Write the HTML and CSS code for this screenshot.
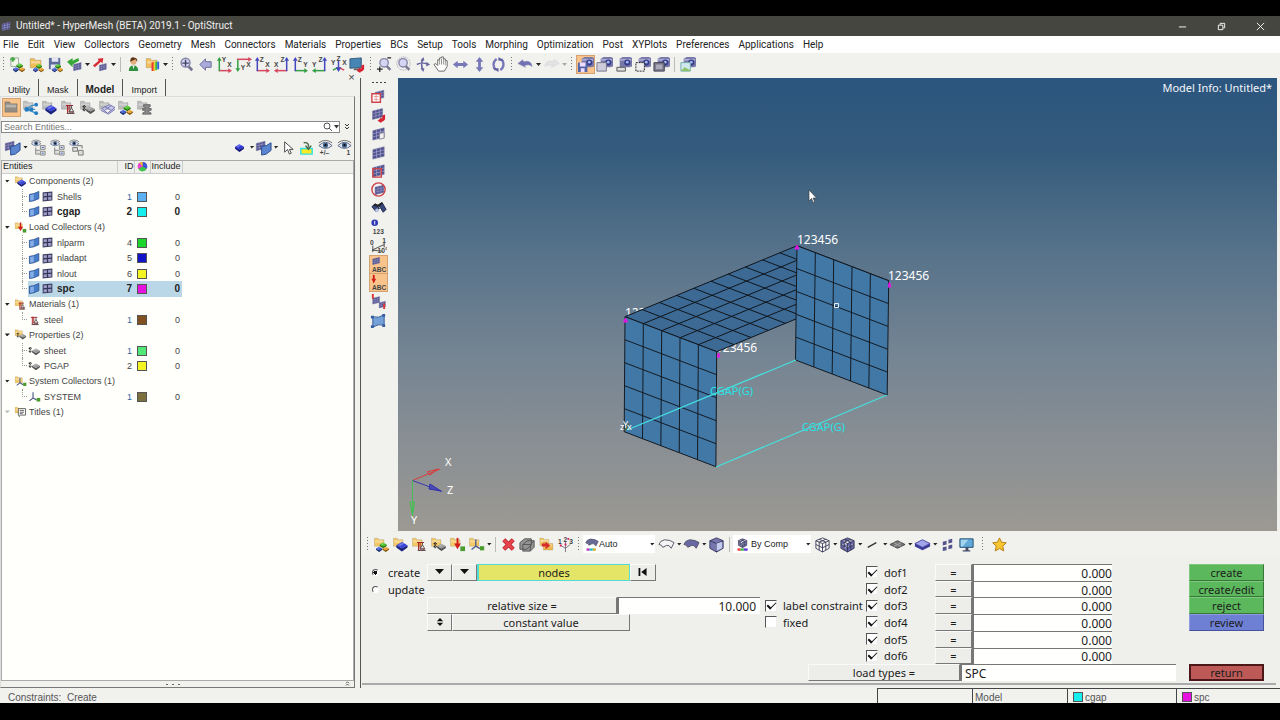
FILE: index.html
```html
<!DOCTYPE html>
<html lang="en">
<head>
<meta charset="utf-8">
<title>Untitled* - HyperMesh (BETA) 2019.1 - OptiStruct</title>
<link rel="stylesheet" href="styles.css">
</head>
<body>
<svg class="defs" aria-hidden="true">
<symbol id="blk" viewBox="0 0 18 18"><path d="M2 8v3l7 5 7-5V8l-7 4z" fill="currentColor"/><path d="M2 8v3l7 5 7-5V8l-7 4z" fill="#000" opacity=".45"/><path d="M2 8l7-4 7 4-7 4z" fill="currentColor"/><path d="M4 8l5-3 3 1-5 3z" fill="#fff" opacity=".3"/></symbol>
<symbol id="fold" viewBox="0 0 18 18"><path d="M2 3h5l1 2h7v9H2z" fill="currentColor" stroke="#0004" stroke-width=".6"/><path d="M3 6h11v3H3z" fill="#fff" opacity=".35"/></symbol>
<symbol id="mesh" viewBox="0 0 18 18"><path d="M3 6l12-3v10L3 16z" fill="#51518f" stroke="#77779f" stroke-width=".6"/><path d="M7 5v10M11 4v10M3 9.300l12-3M3 12.600l12-3" stroke="#b9b9dc" stroke-width=".6" fill="none"/></symbol>
<symbol id="cam" viewBox="0 0 18 18"><path d="M4 3l3-2h8l2 1v9l-3 1H4z" fill="#7777a8"/><path d="M4 3h12v2H4z" fill="#a9a9d4"/><circle cx="12" cy="7" r="3.200" fill="#333b88"/><circle cx="12" cy="6.500" r="1.500" fill="#a7b8ee"/></symbol>
<symbol id="comp" viewBox="0 0 18 18"><use href="#fold" color="#f3c866" width="14" height="14"/><use href="#blk" x="3" y="3" width="15" height="15" color="#3543db"/></symbol>
<symbol id="trio" viewBox="0 0 18 18"><use href="#blk" x="4" y="1" width="12" height="12" color="#45c325"/><use href="#blk" x="-1" y="7" width="11" height="11" color="#3557cf"/><use href="#blk" x="8" y="7" width="11" height="11" color="#e99c20"/></symbol>
<symbol id="assem" viewBox="0 0 18 18"><use href="#fold" width="14" height="14"/><use href="#trio" x="3" y="4" width="14" height="14"/></symbol>
<symbol id="rig" viewBox="0 0 18 18"><path d="M6 16V6h2v8h5v2zM4 6h9" fill="none" stroke="#a92626" stroke-width="1.300"/><path d="M11 6v3l-3 5h6l-3-5M5 16h10" fill="none" stroke="#555" stroke-width="1.200"/></symbol>
<symbol id="matf" viewBox="0 0 18 18"><use href="#fold" width="14" height="14"/><use href="#rig" x="3" y="2" width="15" height="15"/></symbol>
<symbol id="prop" viewBox="0 0 18 18"><path d="M3 4v9M1 6h4M1 10h4" stroke="#222" stroke-width="1.500" stroke-dasharray="2 1"/><use href="#blk" x="4" y="2" width="14" height="16" color="#999"/></symbol>
<symbol id="propf" viewBox="0 0 18 18"><use href="#fold" width="14" height="14"/><use href="#prop" x="3" y="3" width="15" height="15"/></symbol>
<symbol id="loadf" viewBox="0 0 18 18"><use href="#fold" color="#f3c866" width="14" height="14"/><path d="M9 2v7" stroke="#d21c1c" stroke-width="2"/><path d="M5.500 8h7L9 14z" fill="#d21c1c"/><path d="M12 11h5v5h-5z" fill="#4a9c2d"/></symbol>
<symbol id="sys" viewBox="0 0 18 18"><path d="M7 3v8l-5 4M7 11l5 3" fill="none" stroke="#4c5a8a" stroke-width="1.600"/><path d="M12 11h5v5h-5z" fill="#4a9c2d"/></symbol>
<symbol id="sysf" viewBox="0 0 18 18"><use href="#fold" color="#f3c866" width="14" height="14"/><use href="#sys" x="2" y="1" width="16" height="16"/></symbol>
<symbol id="titlef" viewBox="0 0 18 18"><use href="#fold" color="#f3c866" width="13" height="15"/><path d="M6 5h10v9H9l-2 2v-2H6z" fill="#fff" stroke="#333"/><path d="M8 7.500h6M8 10h6M8 12h4" stroke="#333"/></symbol>
<symbol id="geo" viewBox="0 0 18 18"><path d="M2 6l6-1 7-3v10l-7 3-6 1z" fill="#477dc8" stroke="#1f4586"/><path d="M3 7l5-1v8l-5 1z" fill="#86aee5"/></symbol>
<symbol id="elem" viewBox="0 0 18 18"><path d="M3 4l12-1v11L3 15z" fill="#9c9cc8" stroke="#444466" stroke-width="1.500"/><path d="M9 3v12M3 9.500L15 8.500" stroke="#333355" stroke-width="1.600"/></symbol>
<symbol id="meshgeo" viewBox="0 0 18 18"><use href="#mesh" x="-1" y="-1" width="14" height="16"/><path d="M7 8l5-1 5-3v8l-5 4-5 1z" fill="#5b85cf" stroke="#274b91"/></symbol>
<symbol id="eye" viewBox="0 0 18 18"><path d="M2 7q7-7 14 0-7 6-14 0z" fill="#dfe6f4" stroke="#596580"/><circle cx="9" cy="6.500" r="2.700" fill="#41618d"/><circle cx="9" cy="6.500" r="1.200" fill="#111"/><path d="M2 4q7-5 14 0" stroke="#666" fill="none"/></symbol>
<symbol id="eyetree" viewBox="0 0 18 18"><use href="#eye" width="13" height="13"/><path d="M6 9v7h5M6 12h5M11 7h5v4h-5zM11 13h5v4h-5z" fill="#ddd" stroke="#888"/><path d="M12.500 9h2M12.500 15h2" stroke="#36c"/></symbol>
<symbol id="redarr" viewBox="0 0 18 18"><path d="M9 12h4V9l3-1v5q-2 3-4 3v1l-4-2.500 4-3" fill="#d52333"/></symbol>
<symbol id="lens" viewBox="0 0 18 18"><path d="M11 11l5 5" stroke="#777792" stroke-width="3"/><circle cx="8.500" cy="7.500" r="5" fill="#d6d6f4" stroke="#8585a8" stroke-width="1.600"/></symbol>
<symbol id="av" viewBox="0 0 18 18"><path d="M3.500 16V4" stroke="currentColor" stroke-width="1.600"/><path d="M1 5l2.500-4L6 5z" fill="currentColor"/></symbol>
<symbol id="ah" viewBox="0 0 18 18"><path d="M3 15.500h11" stroke="currentColor" stroke-width="1.600"/><path d="M13 13l4 2.500-4 2.500z" fill="currentColor"/></symbol>
<symbol id="cube" viewBox="0 0 18 18"><path d="M2 5l7-3 7 3v8l-7 4-7-4z" fill="#7777ad" stroke="#363660"/><path d="M2 5l7 3 7-3M9 8v9" fill="none" stroke="#363660"/></symbol>
<symbol id="cubeg" viewBox="0 0 18 18"><path d="M2 5l7-3 7 3v8l-7 4-7-4zM2 5l7 3 7-3M9 8v9M5.500 3.500l7 3v8.500M12.500 3.500l-7 3V15M2 9l7 3.500L16 9" fill="currentColor" stroke="#333351" stroke-width=".9"/></symbol>
<symbol id="curve" viewBox="0 0 18 18"><path d="M1 9q1-4 6-5 6 0 10 3l-3 6q-2-4-5-3l-4 2q-1-3-4-3z" fill="currentColor" stroke="#555566"/></symbol>
<symbol id="monitor" viewBox="0 0 18 18"><path d="M2 3h14v9H2z" fill="#60a9d9" stroke="#234d70"/><path d="M3 4h8l-6 7H3z" fill="#a5d4ee"/><path d="M8 12h3v3H8zM5 15h8v1.500H5z" fill="#444b66"/></symbol>
<symbol id="undo" viewBox="0 0 18 18"><path d="M1 8l5-4 1 2q8-2 9 5-3-3-8-1l1 2z" fill="currentColor" stroke="#8080b0" stroke-width=".5"/></symbol>
</svg>

<header class="title"><svg class="app"><use href="#mesh"/></svg><h1>Untitled* - HyperMesh (BETA) 2019.1 - OptiStruct</h1>
<div class="win"><button aria-label="Minimize"><svg viewBox="0 0 10 10"><path d="M1 5.500h8"/></svg></button><button aria-label="Restore"><svg viewBox="0 0 10 10"><path d="M1.500 3.500h5v5h-5zM3.500 3V1.500h5v5H7"/></svg></button><button aria-label="Close"><svg viewBox="0 0 10 10"><path d="M1 1l8 8M9 1L1 9"/></svg></button></div></header>
<nav class="menu"><button>File</button><button>Edit</button><button>View</button><button>Collectors</button><button>Geometry</button><button>Mesh</button><button>Connectors</button><button>Materials</button><button>Properties</button><button>BCs</button><button>Setup</button><button>Tools</button><button>Morphing</button><button>Optimization</button><button>Post</button><button>XYPlots</button><button>Preferences</button><button>Applications</button><button>Help</button></nav>

<div class="bar std" role="toolbar" aria-label="Standard">
<i class="handle"></i>
<button class="ic" aria-label="New"><svg viewBox="0 0 18 18"><path d="M2 2h8v9H2z" fill="#f2f7ea" stroke="#9a9"/><path d="M4 1v5M1.500 3.500h5" stroke="#4a4" stroke-width="2"/><use href="#trio" x="4" y="5" width="13" height="13"/></svg></button>
<button class="ic" aria-label="Open"><svg viewBox="0 0 18 18"><use href="#fold" color="#f0bf58" width="17" height="16"/><use href="#trio" x="5" y="6" width="12" height="12"/></svg></button>
<button class="ic" aria-label="Save"><svg viewBox="0 0 18 18"><path d="M2 2h12v12H2z" fill="#5d6b9c"/><path d="M5 2h7v4H5zM4 9h8v5H4z" fill="#e3e6f2"/><use href="#trio" x="5" y="6" width="12" height="12"/></svg></button>
<button class="ic" aria-label="Import"><svg viewBox="0 0 18 18"><use href="#mesh" x="6" y="4" width="12" height="14"/><path d="M1 6l6-4v3l6-3 1 3-7 4v3z" fill="#38a83a"/></svg></button><i class="dd"></i>
<button class="ic" aria-label="Export"><svg viewBox="0 0 18 18"><use href="#mesh" x="6" y="5" width="11" height="13"/><path d="M1 10l6-5-1-2 6-1-1 6-1.500-2L3 12z" fill="#d92c36"/></svg></button><i class="dd"></i>
<i class="sep"></i>
<button class="ic" aria-label="User profile"><svg viewBox="0 0 18 18"><path d="M4 16q0-6 5-6t5 6z" fill="#2f9140"/><path d="M8 10l1 4 1-4z" fill="#fff"/><circle cx="9" cy="6" r="3.200" fill="#e4ad7e"/><path d="M5.500 6q0-5 4-4.500T13 6l-2-2.500z" fill="#5d3210"/></svg></button>
<button class="ic" aria-label="Results"><svg viewBox="0 0 18 18"><use href="#fold" color="#f0bf58" width="17" height="16"/><path d="M8 7l3-1v10H8z" fill="#e33"/><path d="M10 6h2v10h-2z" fill="#ec3"/><path d="M12 6h2v9h-2z" fill="#3b4"/><path d="M14 6h2v8h-2z" fill="#36d"/></svg></button><i class="dd"></i>
<i class="handle"></i>
<button class="ic" aria-label="Fit"><svg viewBox="0 0 18 18"><use href="#lens" width="17" height="17"/><path d="M8 4v7M4.500 7.500h7" stroke="#446" stroke-width="1.500"/></svg></button>
<button class="ic" aria-label="Previous view"><svg viewBox="0 0 18 18"><path d="M3 9l6-6v3h6v6H9v3z" fill="#a9a9da" stroke="#6a6a99"/></svg></button>
<button class="ic ax" aria-label="XY top"><svg viewBox="0 0 18 18"><use href="#ah" color="#d54a5e"/><use href="#av" color="#35a044"/><text x="6" y="6">Y</text><text x="12" y="12">X</text></svg></button>
<button class="ic ax" aria-label="XY bottom"><svg viewBox="0 0 18 18"><path d="M2 3.500h13" stroke="#d54a5e" stroke-width="1.600"/><path d="M14 1l4 2.500L14 6z" fill="#d54a5e"/><path d="M3 4v10" stroke="#35a044" stroke-width="1.600"/><path d="M.500 13h5L3 17z" fill="#35a044"/><text x="6" y="15">Y</text><text x="12" y="12">X</text></svg></button>
<button class="ic ax" aria-label="XZ left"><svg viewBox="0 0 18 18"><use href="#ah" color="#d54a5e"/><use href="#av" color="#4648bd"/><text x="6" y="6">Z</text><text x="12" y="12">X</text></svg></button>
<button class="ic ax" aria-label="XZ right"><svg viewBox="0 0 18 18"><g transform="matrix(-1 0 0 1 18 0)"><use href="#ah" color="#d54a5e"/><use href="#av" color="#4648bd"/></g><text x="8" y="6">Z</text><text x="1" y="12">X</text></svg></button>
<button class="ic ax" aria-label="YZ front"><svg viewBox="0 0 18 18"><use href="#ah" color="#35a044"/><use href="#av" color="#4648bd"/><text x="6" y="6">Z</text><text x="12" y="12">Y</text></svg></button>
<button class="ic ax" aria-label="YZ rear"><svg viewBox="0 0 18 18"><g transform="matrix(-1 0 0 1 18 0)"><use href="#ah" color="#35a044"/><use href="#av" color="#4648bd"/></g><text x="8" y="6">Z</text><text x="1" y="12">Y</text></svg></button>
<button class="ic ax" aria-label="Isometric"><svg viewBox="0 0 18 18"><path d="M9 12V5" stroke="#4648bd" stroke-width="1.600"/><path d="M9 12l-6 3" stroke="#35a044" stroke-width="1.600"/><path d="M9 12l6 3" stroke="#d54a5e" stroke-width="1.600"/><path d="M6 12h6l-3 5z" fill="#4648bd"/><text x="1" y="9">Y</text><text x="7" y="5">Z</text><text x="13" y="9">X</text></svg></button>
<button class="ic" aria-label="Reset view"><svg viewBox="0 0 18 18"><path d="M1 3l12-1v10L1 13z" fill="#4785b5" stroke="#345a7b"/><path d="M5 14h7" stroke="#666" stroke-width="2"/><use href="#redarr" y="1"/></svg></button>
<i class="handle"></i>
<button class="ic" aria-label="Zoom in out"><svg viewBox="0 0 18 18"><use href="#lens" x="1" width="16" height="17"/><path d="M1 14h6M4 11v6M12 2h4" stroke="#222" stroke-width="1.300"/></svg></button>
<button class="ic" aria-label="Circle zoom"><svg viewBox="0 0 18 18"><use href="#lens" x="1" width="16" height="17"/><circle cx="9" cy="8" r="7" fill="none" stroke="#99a" stroke-dasharray="1 1"/></svg></button>
<button class="ic" aria-label="Rotate"><svg viewBox="0 0 18 18"><path d="M9 3q-2 6 0 12M3 9q6-3 12 0" fill="none" stroke="#6868a0" stroke-width="1.600"/><path d="M7 5l3-4 1 4zM13 6l4 3-4 2zM7 13h4l-1 4z" fill="#6868a0"/></svg></button>
<button class="ic" aria-label="Pan"><svg viewBox="0 0 18 18"><path d="M6 16l-5-7 2-1 2 2V4l2 0V2h2l0-1h2v2h2v2l2 0v6l-3 5z" fill="#fff" stroke="#666"/><path d="M7 4v5M9 3v6M11 3v6M13 5v5" stroke="#777" stroke-width=".8"/></svg></button>
<button class="ic" aria-label="Pan horizontally"><svg viewBox="0 0 18 18"><path d="M1 9l5-4v2.500h6V5l5 4-5 4v-2.500H6V13z" fill="#7878b9"/></svg></button>
<button class="ic" aria-label="Pan vertically"><svg viewBox="0 0 18 18"><path d="M9 1l4 5h-2.500v6H13l-4 5-4-5h2.500V6H5z" fill="#7878b9"/></svg></button>
<button class="ic" aria-label="Spin"><svg viewBox="0 0 18 18"><path d="M7 3q-6 5-1 12M11 15q6-5 1-12" fill="none" stroke="#7878b9" stroke-width="2.400"/><path d="M3 13h6v4zM15 5H9V1z" fill="#5c5c9c"/></svg></button>
<i class="handle"></i>
<button class="ic" aria-label="Undo view"><svg><use href="#undo" color="#7070b5"/></svg></button><i class="dd"></i>
<button class="ic off" aria-label="Redo view"><svg viewBox="0 0 18 18"><use href="#undo" color="#ccc" transform="matrix(-1 0 0 1 18 0)"/></svg></button><i class="dd off"></i>
<i class="handle"></i>
<button class="ic on" aria-label="Save image"><svg viewBox="0 0 18 18"><use href="#cam" x="1"/><path d="M1 7h10v10H1z" fill="#5263a6"/><path d="M3 7h6v4H3zM4 13h4v4H4z" fill="#edf"/></svg></button>
<button class="ic" aria-label="Capture window"><svg viewBox="0 0 18 18"><use href="#cam" x="1"/><path d="M1 7h10v9H1z" fill="#ccd" stroke="#778"/></svg></button>
<button class="ic" aria-label="Capture panel"><svg viewBox="0 0 18 18"><use href="#cam" x="1"/><path d="M2 12h9v4H2z" fill="#ddd" stroke="#555"/></svg></button>
<button class="ic" aria-label="Capture area"><svg viewBox="0 0 18 18"><use href="#cam" x="1"/><path d="M2 7h9v9H2z" fill="#eee" stroke="#222" stroke-dasharray="2 1"/></svg></button>
<button class="ic" aria-label="Capture screen"><svg viewBox="0 0 18 18"><use href="#cam" x="1"/><path d="M1 7h11v9H1z" fill="#778" stroke="#445"/><path d="M3 9h7v5H3z" fill="#aab"/></svg></button>
<i class="sep"></i>
<button class="ic" aria-label="Capture picture"><svg viewBox="0 0 18 18"><use href="#cam" x="1"/><path d="M2 7h10v9H2z" fill="#cfe9ef" stroke="#7aa"/><path d="M2 16l4-4 6 3v1z" fill="#8cc466"/></svg></button>
</div>

<div class="work">
<aside class="browser">
<button class="x" aria-label="Close browser">×</button>
<div class="tabs" role="tablist"><button role="tab">Utility</button><button role="tab">Mask</button><button role="tab" aria-selected="true">Model</button><button role="tab">Import</button></div>
<div class="pane">
<div class="views">
<button class="ic on" aria-label="Model view"><svg color="#938d84"><use href="#fold"/></svg></button>
<button class="ic" aria-label="Include view"><svg viewBox="0 0 18 18" color="#bbb"><use href="#fold" width="14" height="14"/><path d="M5 11l5-4 6-1M5 11l5 2 5 2M5 11h9" stroke="#4596ce" stroke-width="1.500" fill="none"/><g fill="#257bc0"><circle cx="5" cy="11" r="2.500"/><circle cx="15" cy="6" r="2"/><circle cx="15" cy="15" r="2"/><circle cx="10" cy="11" r="2"/></g></svg></button>
<button class="ic" aria-label="Component view"><svg viewBox="0 0 18 18" color="#bbb"><use href="#fold" width="14" height="14"/><use href="#blk" x="3" y="3" width="15" height="15" color="#3543db"/></svg></button>
<button class="ic" aria-label="Material view"><svg color="#bbb"><use href="#matf"/></svg></button>
<button class="ic" aria-label="Property view"><svg color="#bbb"><use href="#propf"/></svg></button>
<button class="ic" aria-label="Ply view"><svg viewBox="0 0 18 18" color="#bbb"><use href="#fold" width="14" height="14"/><path d="M4 10l8-4 6 3-8 6zM3 12l8 4 7-5M7 8l7 4M14 7l-7 5" fill="#c8c8e8" stroke="#7474ae"/></svg></button>
<button class="ic" aria-label="Assembly view"><svg color="#bbb"><use href="#assem"/></svg></button>
<button class="ic" aria-label="Connector view"><svg viewBox="0 0 18 18" color="#bbb"><use href="#fold" width="14" height="14"/><path d="M8 6h7v2l-2 1v1h3v2h-3v1l3 2v1H7v-1l3-2v-1H7v-2h3V9L8 8z" fill="#888" stroke="#666"/></svg></button>
</div>
<div class="find"><label><input type="text" placeholder="Search Entities..." aria-label="Search Entities"><svg viewBox="0 0 16 10"><circle cx="4" cy="4" r="3" fill="none" stroke="#555"/><path d="M6 6l3 3" stroke="#555"/><path d="M11 3h5l-2.500 3.500z" fill="#333"/></svg></label><button aria-label="More options"><svg viewBox="0 0 6 8"><path d="M1 1l2 2 2-2M1 4l2 2 2-2" fill="none" stroke="#333"/></svg></button></div>
<div class="bar filter">
<button class="ic" aria-label="Display"><svg><use href="#meshgeo"/></svg></button><i class="dd"></i>
<button class="ic" aria-label="Expand all"><svg><use href="#eyetree"/></svg></button>
<button class="ic" aria-label="Collapse all"><svg><use href="#eyetree"/></svg></button>
<button class="ic" aria-label="Reverse"><svg viewBox="0 0 18 18"><use href="#eye" width="13" height="13"/><path d="M5 9h5v4H5zM11 12h5v5h-5zM9 7h6v3" fill="#ddd" stroke="#777"/></svg></button>
<i class="fill"></i>
<button class="ic" aria-label="Components"><svg viewBox="0 0 18 18"><use href="#blk" x="3" y="3" width="12" height="12" color="#2c35db"/></svg></button><i class="dd slim"></i>
<button class="ic" aria-label="Elements and geometry"><svg><use href="#meshgeo"/></svg></button><i class="dd slim"></i>
<button class="ic" aria-label="Selector"><svg viewBox="0 0 18 18"><path d="M6 3v11l3-3 2 5 2-1-2-4h4z" fill="#fff" stroke="#444"/></svg></button>
<button class="ic" aria-label="Add to display"><svg viewBox="0 0 18 18"><path d="M3 10h12v6H3z" fill="#ffe926" stroke="#30dfe1" stroke-width="1.500"/><path d="M6 4q6-1 5 5M8 7l3 4 3-4" fill="none" stroke="#464" stroke-width="1.500"/></svg></button>
<button class="ic ax" aria-label="Show or hide"><svg viewBox="0 0 18 18"><use href="#eye" x="0" y="0"/><text x="3" y="17">+/–</text></svg></button>
<button class="ic ax" aria-label="Isolate"><svg viewBox="0 0 18 18"><use href="#eye"/><text x="11" y="17">1</text></svg></button>
</div>
<div class="treebox">
<table class="tree">
<thead><tr><th class="c0">Entities</th><th class="c1">ID</th><th class="c2"><svg viewBox="0 0 12 12"><circle cx="6" cy="6" r="5" fill="#e33a3a"/><path d="M6 6V1a5 5 0 0 1 4.500 7.500z" fill="#3458dd"/><path d="M6 6l4.500 2.500a5 5 0 0 1-9 0z" fill="#3cc64b"/><path d="M6 6L1.500 8.500A5 5 0 0 1 3 2z" fill="#e943d8"/><path d="M6 6L3 2a5 5 0 0 1 3-1z" fill="#edce33"/></svg></th><th class="c3">Include</th><th></th></tr></thead>
<tbody>
<tr class="g"><td><span class="tw"></span><svg><use href="#comp"/></svg>Components (2)</td><td></td><td></td><td></td><td></td></tr>
<tr><td><div class="e"><svg><use href="#geo"/></svg><svg><use href="#elem"/></svg>Shells</div></td><td class="b">1</td><td><b class="sw sky"></b></td><td>0</td><td></td></tr>
<tr class="cur"><td><div class="e last"><svg><use href="#geo"/></svg><svg><use href="#elem"/></svg>cgap</div></td><td>2</td><td><b class="sw cyan"></b></td><td>0</td><td></td></tr>
<tr class="g"><td><span class="tw"></span><svg><use href="#loadf"/></svg>Load Collectors (4)</td><td></td><td></td><td></td><td></td></tr>
<tr><td><div class="e"><svg><use href="#geo"/></svg><svg><use href="#elem"/></svg>nlparm</div></td><td>4</td><td><b class="sw green"></b></td><td>0</td><td></td></tr>
<tr><td><div class="e"><svg><use href="#geo"/></svg><svg><use href="#elem"/></svg>nladapt</div></td><td>5</td><td><b class="sw blue"></b></td><td>0</td><td></td></tr>
<tr><td><div class="e"><svg><use href="#geo"/></svg><svg><use href="#elem"/></svg>nlout</div></td><td>6</td><td><b class="sw yellow"></b></td><td>0</td><td></td></tr>
<tr class="cur sel"><td><div class="e last"><svg><use href="#geo"/></svg><svg><use href="#elem"/></svg>spc</div></td><td>7</td><td><b class="sw magenta"></b></td><td>0</td><td></td></tr>
<tr class="g"><td><span class="tw"></span><svg color="#f3c866"><use href="#matf"/></svg>Materials (1)</td><td></td><td></td><td></td><td></td></tr>
<tr><td><div class="e last"><svg><use href="#rig"/></svg>steel</div></td><td class="b">1</td><td><b class="sw brown"></b></td><td>0</td><td></td></tr>
<tr class="g"><td><span class="tw"></span><svg color="#f3c866"><use href="#propf"/></svg>Properties (2)</td><td></td><td></td><td></td><td></td></tr>
<tr><td><div class="e"><svg><use href="#prop"/></svg>sheet</div></td><td class="b">1</td><td><b class="sw mint"></b></td><td>0</td><td></td></tr>
<tr><td><div class="e last"><svg><use href="#prop"/></svg>PGAP</div></td><td>2</td><td><b class="sw yellow"></b></td><td>0</td><td></td></tr>
<tr class="g"><td><span class="tw"></span><svg><use href="#sysf"/></svg>System Collectors (1)</td><td></td><td></td><td></td><td></td></tr>
<tr><td><div class="e last"><svg><use href="#sys"/></svg>SYSTEM</div></td><td class="b">1</td><td><b class="sw olive"></b></td><td>0</td><td></td></tr>
<tr class="g"><td><span class="tw shut"></span><svg><use href="#titlef"/></svg>Titles (1)</td><td></td><td></td><td></td><td></td></tr>
</tbody></table>
</div>
<div class="grip"><i></i><svg viewBox="0 0 6 8"><path d="M1 3l2-2 2 2M1 6l2-2 2 2" fill="none" stroke="#333"/></svg></div>
</div>
</aside>

<main>
<div class="stage">
<div class="side" role="toolbar" aria-label="Visualization">
<i class="hh"></i>
<button class="ic" aria-label="Mask"><svg viewBox="0 0 18 18"><use href="#mesh" x="3" y="0" width="14" height="14"/><path d="M2 6h9v9H2z" fill="#fff" stroke="#cf4148" stroke-width="1.500"/><path d="M4 9h5M4 12h5M6.500 7v7" stroke="#e39a9a"/></svg></button>
<button class="ic" aria-label="Reverse mask"><svg viewBox="0 0 18 18"><use href="#mesh" width="16" height="16"/><use href="#redarr" y="1"/></svg></button>
<button class="ic" aria-label="Unmask adjacent"><svg viewBox="0 0 18 18"><use href="#mesh"/><path d="M10 9l5-1v6l-5 1z" fill="#eee" stroke="#889"/></svg></button>
<button class="ic" aria-label="Unmask all"><svg><use href="#mesh"/></svg></button>
<button class="ic" aria-label="Unmask shown"><svg viewBox="0 0 18 18"><use href="#mesh"/><path d="M3 7h9v9H3z" fill="none" stroke="#cf4148" stroke-width="1.500"/></svg></button>
<button class="ic" aria-label="Spherical clipping"><svg viewBox="0 0 18 18"><use href="#mesh" x="3" y="2" width="14" height="14"/><circle cx="9" cy="9" r="7" fill="none" stroke="#cf4148" stroke-width="1.500"/></svg></button>
<button class="ic" aria-label="Find"><svg viewBox="0 0 18 18"><path d="M2 7l4-3 4 5-4 3zM9 5l4-2 4 7-3 3z" fill="#374778" stroke="#1c254d"/><path d="M4 5l5 1 4-3" stroke="#222" stroke-width="2" fill="none"/><circle cx="7.500" cy="11" r="2" fill="#b8c5e6"/></svg></button>
<button class="ic ax" aria-label="Numbers"><svg viewBox="0 0 18 18"><circle cx="5" cy="5" r="3.500" fill="#2d39b4"/><path d="M5 3v4" stroke="#fff"/><text x="3" y="17">123</text></svg></button>
<button class="ic ax" aria-label="Measure"><svg viewBox="0 0 18 18"><path d="M3 9v7M2 14l13-6M15 6v5M3 14l10 1" stroke="#444" fill="none"/><text x="0" y="8">0</text><text x="13" y="6">1</text><text x="8" y="17">10°</text></svg></button>
<button class="ic ax on" aria-label="Element labels"><svg viewBox="0 0 18 18"><use href="#mesh" x="1" y="-1" width="11" height="12"/><text x="2" y="17">ABC</text></svg></button>
<button class="ic ax on" aria-label="Load labels"><svg viewBox="0 0 18 18"><path d="M4 1v5" stroke="#d21c1c" stroke-width="2"/><path d="M1.500 5h5L4 10z" fill="#d21c1c"/><text x="2" y="17">ABC</text></svg></button>
<button class="ic" aria-label="Load handles"><svg viewBox="0 0 18 18"><use href="#mesh" x="1" y="2" width="11" height="11"/><use href="#mesh" x="8" y="7" width="10" height="10"/><path d="M3 1v5M15 11v6" stroke="#d33" stroke-width="2"/></svg></button>
<button class="ic" aria-label="Morph shape"><svg viewBox="0 0 18 18"><path d="M3 5q6 2 12-2v11q-6-2-12 2z" fill="#76a1d8" stroke="#2f5a96"/><path d="M1 4h3v3H1zM13 2h3v3h-3zM1 14h3v3H1zM13 13h3v3h-3z" fill="#345e9f"/></svg></button>
</div>
<section class="view" aria-label="Model view">
<svg viewBox="398 78 879 453">
<g class="lab"><text x="625" y="317">123456</text><text x="716" y="352">123456</text></g>
<g class="top" transform="matrix(17.200 -7.100 18.340 7 625 316.700)"><path d="M0 0h10v5H0zM0 1h10M0 2h10M0 3h10M0 4h10M1 0v5M2 0v5M3 0v5M4 0v5M5 0v5M6 0v5M7 0v5M8 0v5M9 0v5"/></g>
<g class="wall" transform="matrix(18.340 7 -.160 23 625 316.700)"><path d="M0 0h5v5H0zM0 1h5M0 2h5M0 3h5M0 4h5M1 0v5M2 0v5M3 0v5M4 0v5"/></g>
<g class="wall" transform="matrix(18.340 7 -.300 22.860 797 245.700)"><path d="M0 0h5v5H0zM0 1h5M0 2h5M0 3h5M0 4h5M1 0v5M2 0v5M3 0v5M4 0v5"/></g>
<path d="M627 430L796 360M716 467L887 395" stroke="#45e0df" stroke-width="1.300"/>
<g class="gap"><text x="710" y="395">CGAP(G)</text><text x="802" y="431">CGAP(G)</text></g>
<g class="lab"><text x="797" y="244">123456</text><text x="888" y="280">123456</text></g>
<path d="M623.500 322l2-4 2 4zM795 249l2-4 2 4zM888 287l1.500-5 1.500 5zM717 357l1.500-4 1.500 4z" fill="#c31bd0" stroke="#ee18ee"/>
<path d="M834.500 303.500h4v4h-4z" fill="none" stroke="#e5edf3"/>
<path d="M625 431l4-8M624 423l7 7" stroke="#5f6b21"/>
<g class="tiny"><text x="620" y="430">z</text><text x="623" y="428">Y</text><text x="627" y="430">x</text></g>
<path d="M412.500 480.500L440 469" stroke="#d93a3a"/><path d="M427 472l11-3-8 6z" fill="none" stroke="#d93a3a"/>
<path d="M412.500 480.500L442 491.500" stroke="#3838b4"/><path d="M430 484l11 7-12-2z" fill="#4c4cae" stroke="#3030b4"/>
<path d="M412.500 480.500V517" stroke="#48bd55"/><path d="M410 502h4.500l-2 13z" fill="none" stroke="#3cc14c"/>
<g class="lab tri"><text x="445" y="466">X</text><text x="447" y="494">Z</text><text x="411" y="524">Y</text></g>
<path d="M809 190v11l2.500-2.500 1.700 4 1.500-.700-1.700-3.800h3.500z" fill="#fff" stroke="#333" stroke-width=".6"/>
</svg>
<p>Model Info: Untitled*</p>
</section>
</div>

<div class="bar low" role="toolbar" aria-label="Collectors and display">
<i class="handle"></i>
<button class="ic" aria-label="Assemblies"><svg color="#f3c866"><use href="#assem"/></svg></button>
<button class="ic" aria-label="Components"><svg><use href="#comp"/></svg></button>
<button class="ic" aria-label="Materials"><svg color="#f3c866"><use href="#matf"/></svg></button>
<button class="ic" aria-label="Properties"><svg color="#f3c866"><use href="#propf"/></svg></button>
<button class="ic" aria-label="Load collectors"><svg><use href="#loadf"/></svg></button>
<button class="ic" aria-label="System collectors"><svg><use href="#sysf"/></svg></button><i class="dd"></i>
<i class="sep"></i>
<button class="ic" aria-label="Delete"><svg viewBox="0 0 18 18"><path d="M4 4l10 10M14 4L4 14" stroke="#b3222c" stroke-width="4.500"/><path d="M4 4l10 10M14 4L4 14" stroke="#e6434b" stroke-width="3"/></svg></button>
<button class="ic" aria-label="Card edit"><svg viewBox="0 0 18 18"><path d="M1 7l5-4h7v7l-5 4H1zM4 9l5-4h7v7l-4 4H4z" fill="#949494" stroke="#555"/><path d="M4 9h8v7M12 9l4-4" fill="none" stroke="#555"/></svg></button>
<button class="ic" aria-label="Organize"><svg viewBox="0 0 18 18"><use href="#fold" color="#f3c866" width="14" height="13"/><use href="#fold" color="#f0b84c" x="4" y="4" width="14" height="14"/><path d="M4 8h4V6l5 4-5 4v-3H4z" fill="#d82b2b"/></svg></button>
<button class="ic ax" aria-label="Renumber"><svg viewBox="0 0 18 18"><path d="M9 6v11M4 10l5 3 5-4" stroke="#778" fill="none"/><text x="1" y="8">1</text><text x="7" y="6">2</text><text x="13" y="8">3</text><path d="M3 10h2M11 3h2M8 9h2" stroke="#d25" stroke-width="2"/></svg></button>
<i class="handle"></i>
<label class="combo auto"><svg viewBox="0 0 18 18"><use href="#curve" y="-2" color="#696998"/><path d="M2 14h4v3H2z" fill="#b3b"/><path d="M6 14h4v3H6z" fill="#2bc"/><path d="M10 14h4v3h-4z" fill="#ca2"/></svg><select aria-label="Element color mode"><option>Auto</option></select><i class="dd"></i></label>
<button class="ic" aria-label="Wireframe geometry"><svg color="#f4f4f4"><use href="#curve"/></svg></button><i class="dd"></i>
<button class="ic" aria-label="Shaded geometry"><svg color="#6868a5"><use href="#curve"/></svg></button><i class="dd"></i>
<button class="ic" aria-label="Transparency"><svg viewBox="0 0 18 18"><use href="#cube"/><path d="M9 8l6-2v7l-6 3z" fill="#c3cbee"/></svg></button>
<i class="sep"></i>
<label class="combo comp"><svg viewBox="0 0 18 18"><use href="#cubeg" color="#6e6e9f" x="1" width="15" height="14"/><path d="M2 14h4v3H2z" fill="#e33"/><path d="M6 14h4v3H6z" fill="#3b3"/><path d="M10 14h5v3h-5z" fill="#63d"/></svg><select aria-label="Element color by"><option>By Comp</option></select><i class="dd"></i></label>
<button class="ic" aria-label="Wireframe elements"><svg color="#f6f6f4"><use href="#cubeg"/></svg></button><i class="dd"></i>
<button class="ic" aria-label="Shaded elements"><svg color="#6868ac"><use href="#cubeg"/></svg></button><i class="dd"></i>
<button class="ic" aria-label="1D elements"><svg viewBox="0 0 18 18"><path d="M4 12l9-5" stroke="#333" stroke-width="1.500"/></svg></button><i class="dd"></i>
<button class="ic" aria-label="2D elements"><svg viewBox="0 0 18 18"><path d="M1 9l8-4 8 4-8 4z" fill="#777" stroke="#444"/><path d="M5 7l8 4M5 11l8-4" stroke="#aaa"/></svg></button><i class="dd"></i>
<button class="ic" aria-label="3D elements"><svg viewBox="0 0 18 18"><path d="M1 8v3l8 4 8-4V8l-8 4z" fill="#3b3b9c"/><path d="M1 8l8-4 8 4-8 4z" fill="#a3a6ed" stroke="#444499"/></svg></button><i class="dd"></i>
<button class="ic" aria-label="Shrink elements"><svg viewBox="0 0 18 18"><path d="M4 6l4-1v4l-4 1zM10 4l4-1v4l-4 1zM4 12l4-1v4l-4 1zM10 10l4-1v4l-4 1z" fill="#55558e"/></svg></button>
<button class="ic" aria-label="Display settings"><svg><use href="#monitor"/></svg></button>
<i class="handle wide"></i>
<button class="ic" aria-label="Favorites"><svg viewBox="0 0 18 18"><path d="M9 2l2.200 4.600 5 .600-3.700 3.500 1 5.100L9 13.300l-4.500 2.500 1-5.100L1.800 7.200l5-.600z" fill="#f7c52e" stroke="#b67b13"/></svg></button>
</div>

<form class="panel">
<label class="radio r1"><input type="radio" name="mode" checked>create</label>
<label class="radio r2"><input type="radio" name="mode">update</label>
<button type="button" class="k p-d1" aria-label="Entity options"><svg viewBox="0 0 10 6"><path d="M0 0h9L4.500 5z"/></svg></button>
<button type="button" class="k p-d2" aria-label="Selector options"><svg viewBox="0 0 10 6"><path d="M0 0h9L4.500 5z"/></svg></button>
<button type="button" class="k nodes">nodes</button>
<button type="button" class="k p-rs" aria-label="Reset selection"><svg viewBox="0 0 10 9"><path d="M0 0h2v9H0zM9 0v9L3 4.500z"/></svg></button>
<button type="button" class="k p-rel">relative size =</button>
<input type="text" class="t p-reli" value="10.000" aria-label="relative size">
<button type="button" class="k p-sp" aria-label="Toggle value type"><svg viewBox="0 0 8 10"><path d="M0 4l4-4 4 4zM0 6l4 4 4-4z"/></svg></button>
<button type="button" class="k p-cv">constant value</button>
<label class="chk p-lc"><input type="checkbox" checked>label constraint</label>
<label class="chk p-fx"><input type="checkbox">fixed</label>
<label class="chk d d1"><input type="checkbox" checked>dof1</label><button type="button" class="k q d1">=</button><input type="text" class="t v d1" value="0.000" aria-label="dof1 value">
<label class="chk d d2"><input type="checkbox" checked>dof2</label><button type="button" class="k q d2">=</button><input type="text" class="t v d2" value="0.000" aria-label="dof2 value">
<label class="chk d d3"><input type="checkbox" checked>dof3</label><button type="button" class="k q d3">=</button><input type="text" class="t v d3" value="0.000" aria-label="dof3 value">
<label class="chk d d4"><input type="checkbox" checked>dof4</label><button type="button" class="k q d4">=</button><input type="text" class="t v d4" value="0.000" aria-label="dof4 value">
<label class="chk d d5"><input type="checkbox" checked>dof5</label><button type="button" class="k q d5">=</button><input type="text" class="t v d5" value="0.000" aria-label="dof5 value">
<label class="chk d d6"><input type="checkbox" checked>dof6</label><button type="button" class="k q d6">=</button><input type="text" class="t v d6" value="0.000" aria-label="dof6 value">
<button type="button" class="k p-lt">load types =</button>
<input type="text" class="t p-lti" value="SPC" aria-label="load types">
<button type="button" class="k act d1">create</button>
<button type="button" class="k act d2">create/edit</button>
<button type="button" class="k act d3">reject</button>
<button type="button" class="k act d4 rev">review</button>
<button type="button" class="k act d7 ret">return</button>
</form>
</main>
</div>
<footer class="status"><span class="msg">Constraints:&nbsp; Create</span><span class="cell"></span><span class="cell">Model</span><span class="cell w"><b class="sw cyan"></b>cgap</span><span class="cell end"><b class="sw magenta"></b>spc</span></footer>
</body>
</html>
```
FILE: styles.css
```css
*{box-sizing:border-box}
body{margin:0;height:100vh;padding:16px 0 17px;background:#000;display:flex;flex-direction:column;overflow:hidden;font:9px/12px "Liberation Sans",Arial,sans-serif;color:#222}
button{font:inherit;color:inherit;border:0;padding:0;margin:0;background:none}
input,select{font:inherit;color:inherit;margin:0}
svg{display:block}
.defs{position:absolute;width:0;height:0}

.title{height:20px;flex:none;background:#464641;color:#eee;display:flex;align-items:center;gap:4px;font:10px/18px Roboto,"Noto Sans",sans-serif}
.title h1{font-size:10px;font-weight:400;margin:0;flex:1}
.app{width:12px;height:14px}
.win{display:flex}
.win button{width:39px;height:20px;display:grid;place-items:center}
.win svg{width:9px;height:9px;fill:none;stroke:#fff;stroke-width:1}
.menu{height:17px;flex:none;background:#fff;display:flex;align-items:center;gap:9px;padding-left:3px;font:10px/16px Roboto,"Noto Sans",sans-serif}
.menu button{white-space:nowrap}

.bar{display:flex;align-items:center;height:25px;flex:none;background:#f1f1ee}
.std{padding-bottom:2px}
.ic{width:19px;height:19px;flex:none;display:grid;place-items:center}
.ic svg{width:17px;height:17px}
.ic.on{background:#f9c48c;box-shadow:inset 0 0 0 1px #d3a272}
.off{opacity:.35}
.ax text{font:bold 7px "Liberation Sans",sans-serif;fill:#444}
.dd{width:7px;flex:none;height:3px;background:#222;clip-path:polygon(1px 0,6px 0,50% 100%)}
.sep{width:7px;flex:none;height:15px;background:linear-gradient(#bbb,#bbb) 50%/1px 100% no-repeat}
.handle{width:8px;flex:none;height:15px;background:repeating-linear-gradient(#777 0 1px,transparent 1px 3px) 3px 0/1px 100% no-repeat}

.work{flex:1;min-height:0;display:grid;grid-template-columns:362px minmax(0,1fr);background:#efefec}
.browser{display:flex;flex-direction:column;position:relative;padding-right:5px;margin-right:1px;border-right:1px solid #555;background:#f1f1ee}
.x{position:absolute;right:4px;top:-6px;font-size:11px;line-height:11px;color:#444;width:9px}
.tabs{display:flex;height:18px;flex:none;align-items:end}
.tabs button{height:17px;padding:4px 8px 0;line-height:12px;border-right:1px solid #555}
.tabs button[aria-selected]{font-size:10px;font-weight:bold}
.pane{flex:1;min-height:0;display:flex;flex-direction:column;border:1px solid;border-color:#ddd #777 #777 #ddd}
.views{display:flex;height:20px;flex:none;align-items:center;padding-left:1px}
.find{display:flex;height:18px;align-items:center;flex:none;margin-top:1px}
.find label{flex:1;height:12px;border:1px solid #888;background:#fff;display:flex;align-items:center;min-width:0}
.find input{flex:1;border:0;background:none;padding:0 2px;height:10px;outline:0;min-width:0}
.find input::placeholder{color:#777}
.find label svg{width:16px;height:10px}
.find button{width:14px;display:grid;place-items:center}
.find button svg{width:6px;height:8px}
.filter{height:22px;padding:0 0 0 2px}
.filter .slim{width:5px}
.fill{flex:1}
.treebox{flex:1;min-height:0;border:1px solid #aaa;background:#fffffc;margin-top:2px}
.tree{width:100%;height:259px;border-collapse:collapse;table-layout:fixed;color:#444}
.tree th{font-weight:400;height:12px;padding:0;background:#efefec;color:#222;text-align:left;border-right:1px solid #ccc;border-bottom:1px solid #ccc;line-height:11px;overflow:hidden;white-space:nowrap}
.tree th:last-child{border-right:0}
.tree .c0{width:115px;padding-left:1px}
.tree .c1{width:17px;text-align:right}
.tree .c2{width:16px}
.tree .c2 svg{width:11px;height:11px;margin:auto}
.tree .c3{width:32px;padding-left:1px}
.tree td{padding:0;line-height:14px;white-space:nowrap}
.tree td:nth-child(2),.tree td:nth-child(4){text-align:right;padding-right:2px}
.tree td svg{width:13px;height:13px;flex:none}
.tree .g td:first-child{display:flex;align-items:center;gap:2px;height:15px}
.tw{width:10px;height:3px;background:#222;clip-path:polygon(3px 0,8px 0,5px 100%);flex:none}
.tw.shut{background:#bbb}
.e{display:flex;align-items:center;height:15px;margin-left:20px;padding-left:6px;position:relative}
.e::before{content:"";position:absolute;left:0;top:0;bottom:0;border-left:1px dotted #999}
.e.last::before{bottom:7px}
.e::after{content:"";position:absolute;left:0;top:7px;width:5px;border-top:1px dotted #999}
.e svg:last-of-type{margin-right:3px}
.cur{font-weight:bold;font-size:10px;color:#222}
.sel td:not(:last-child){background:#b9d7e7}
.sel td:first-child{background:linear-gradient(#b9d7e7,#b9d7e7) 26px 0/100% 100% no-repeat!important}
.tree .b{color:#36659a}
.sw{display:block;width:10px;height:10px;border:1px solid #555;margin-left:3px;background:#5cb1f2}
.cyan{background:#16eeee}.green{background:#1ad62b}.blue{background:#1212c9}.yellow{background:#f4f422}.magenta{background:#e613e0}.brown{background:#80501f}.mint{background:#52e878}.olive{background:#7c713d}
.grip{height:6px;flex:none;display:flex;align-items:center;padding-right:4px}
.grip i{flex:1;height:1px;background:repeating-linear-gradient(90deg,#666 0 2px,transparent 2px 6px) center/14px 1px no-repeat}
.grip svg{width:5px;height:6px}

main{display:flex;flex-direction:column;min-width:0}
.stage{flex:1;min-height:0;display:flex;padding-right:3px}
.side{width:36px;flex:none;display:flex;flex-direction:column;align-items:center;background:#f1f1ee;padding-right:3px}
.side .ic{margin-bottom:-1px;height:19px}
.side .ic:nth-child(3n){margin-bottom:0}
.side .ic:nth-child(3n+1){margin-bottom:0}
.hh{width:14px;height:1px;margin:4px 0 4px;background:repeating-linear-gradient(90deg,#444 0 2px,transparent 2px 4px);flex:none}
.view{flex:1;min-width:0;position:relative;background:linear-gradient(#2c557f 0%,#345b7c 16%,#56728a 38%,#768593 62%,#8d9194 85%,#9c9992 100%)}
.view svg{width:100%;height:100%;overflow:hidden}
.view p{position:absolute;right:5px;top:2px;margin:0;color:#f4f7fa;font:11px/15px "Noto Sans",sans-serif}
.view path{vector-effect:non-scaling-stroke}
.view text{font:11px "Noto Sans",sans-serif}
.lab{fill:#fff}
.view .lab text{font-size:12px}
.view .tri text{font-size:11px}
.view .tiny text{font-size:9px;fill:#fff}
.gap{fill:#25e3e6}
.top path{fill:#3c6a94;stroke:#10151c;stroke-width:1}
.wall path{fill:#4278a6;stroke:#131a22;stroke-width:1}

.low{height:24px;padding-left:2px;margin-top:1px}
.low .dd{width:6px}
.low .wide{margin:0 3px}
.combo{display:flex;align-items:center;height:18px;background:#fff;margin-right:2px;padding-left:2px}
.combo svg{width:14px;height:15px;flex:none}
.combo select{appearance:none;border:0;background:none;padding:0;flex:1;min-width:0;outline:0;color:#222}
.auto{width:72px}
.combo.comp{width:78px;padding-left:3px}
.combo.comp svg{margin-right:1px}

.panel{display:grid;height:117px;flex:none;margin:8px 16px 7px 4px;grid-template-columns:61fr 25fr 25fr 140fr 13fr 26fr 104fr 48fr 58fr 69fr 25fr 12fr 140fr 64fr 13fr 75fr;grid-template-rows:repeat(7,minmax(0,1fr));font:11px/15px "Noto Sans",sans-serif;color:#1c1c1c;position:relative}
.panel>*{min-width:0;min-height:0}
.k{border:1px solid;border-color:#fafafa #777 #777 #fafafa;background:#ededea;display:grid;place-items:center;line-height:13px}
.k svg{width:10px;height:8px;fill:#111}
.t{border:0;border-top:1px solid #777;border-left:2px solid #777;background:#fffffd;text-align:right;padding:1px 0 0 3px;font-size:12px;width:100%;outline:0;line-height:13px}
.radio,.chk{display:flex;align-items:center;white-space:nowrap}
.radio input{appearance:none;width:7px;height:7px;border-radius:50%;border:1px solid;border-color:#555 #fff #fff #555;background:#fff;margin:0 9px 0 6px}
.radio input:checked{background:radial-gradient(#111 0 2px,#fff 2px)}
.chk input{appearance:none;width:12px;height:12px;border:1px solid;border-color:#555 #eee #eee #555;background:#fff;margin:0 6px 0 0;flex:none;display:grid;place-items:center}
.chk input:checked::before{content:"";width:7px;height:4px;border:solid #111;border-width:0 0 1px 2px;transform:rotate(-45deg);margin-top:-2px}
.r1{grid-area:1/1}.r2{grid-area:2/1/3/3}
.p-d1{grid-area:1/2}.p-d2{grid-area:1/3}.nodes{grid-area:1/4/2/6;background:#e4e467;border:1px solid #51dcd6;border-left-width:2px}
.p-rs{grid-area:1/6}.p-rel{grid-area:3/2/4/5}.p-reli{grid-area:3/5/4/8;padding-right:4px}
.p-sp{grid-area:4/2}.p-cv{grid-area:4/3/5/6}
.p-lc{grid-area:3/8/4/10}.p-fx{grid-area:4/8/5/10}.p-lc,.p-fx{padding-left:5px}
.d{grid-column:10}.q{grid-column:11/13}.v{grid-column:13}
.act{grid-column:16;background:#5cb85c;border-color:#7ec97e #397739 #397739 #7ec97e}
.d1{grid-row:1}.d2{grid-row:2}.d3{grid-row:3}.d4{grid-row:4}.d5{grid-row:5}.d6{grid-row:6}.d7{grid-row:7}
.rev{background:#6e80d4;border-color:#8d9be3 #46539c #46539c #8d9be3}
.ret{background:#bd5a58;border:2px solid #4c1717}
.p-lt{grid-area:7/9/8/12}.p-lti{grid-area:7/12/8/15;text-align:left}
.panel::after{content:"";position:absolute;left:-4px;right:-12px;bottom:-4px;height:2px;background:#aaa}

.status{height:16px;flex:none;display:flex;background:#f1f1ee;font-size:10px;line-height:13px;color:#555}
.msg{flex:1;padding:4px 8px 0;white-space:nowrap}
.cell{width:95px;border:solid #444;border-width:1px 0 0 1px;padding:2px 0 0 2px;display:flex;align-items:center;gap:2px;margin-top:1px}
.cell.w{width:109px}
.cell.end{width:104px}
```
